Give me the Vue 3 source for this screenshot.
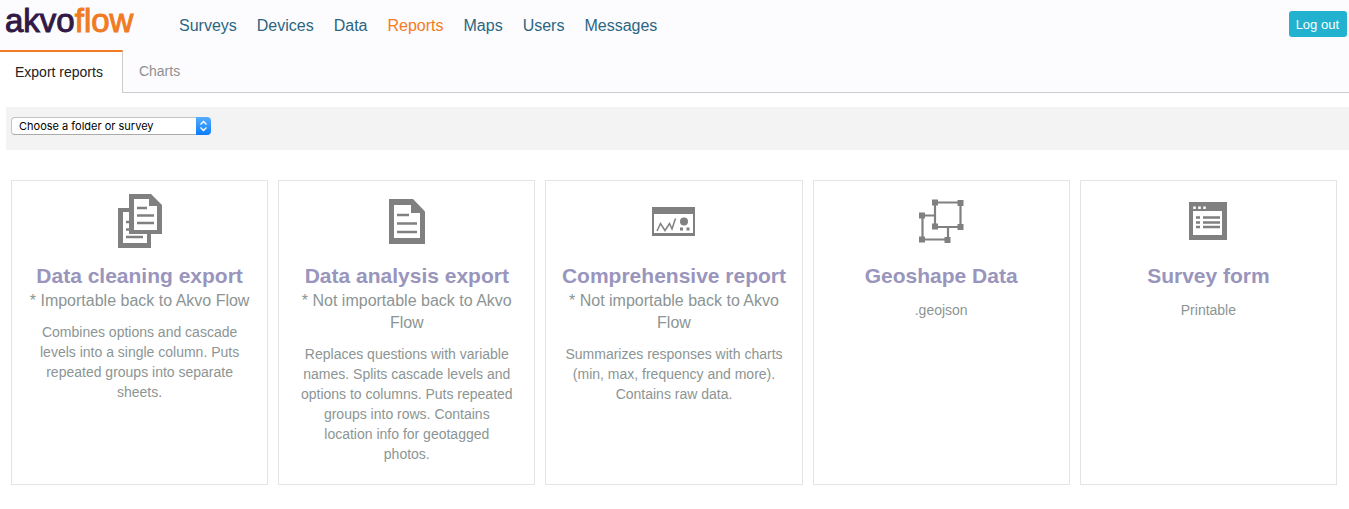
<script setup>
import { ref } from 'vue'

const nav = ['Surveys', 'Devices', 'Data', 'Reports', 'Maps', 'Users', 'Messages']
const activeNav = 'Reports'
const selected = ref('')

const cards = [
  {
    icon: 'copies',
    title: 'Data cleaning export',
    note: '* Importable back to Akvo Flow',
    text: 'Combines options and cascade levels into a single column. Puts repeated groups into separate sheets.'
  },
  {
    icon: 'document',
    title: 'Data analysis export',
    note: '* Not importable back to Akvo Flow',
    text: 'Replaces questions with variable names. Splits cascade levels and options to columns. Puts repeated groups into rows. Contains\nlocation info for geotagged\nphotos.'
  },
  {
    icon: 'dashboard',
    title: 'Comprehensive report',
    note: '* Not importable back to Akvo Flow',
    text: 'Summarizes responses with charts (min, max, frequency and more). Contains raw data.'
  },
  { icon: 'shapes', title: 'Geoshape Data', text: '.geojson' },
  { icon: 'form', title: 'Survey form', text: 'Printable' }
]
</script>

<template>
  <div class="page">
    <header class="top">
      <a class="logo" href="#">akvo<span>flow</span></a>
      <nav class="menu">
        <a v-for="item in nav" :key="item" href="#" :class="{ active: item === activeNav }">{{ item }}</a>
      </nav>
      <button class="logout" type="button">Log out</button>
    </header>

    <nav class="tabs">
      <a class="tab current" href="#">Export reports</a>
      <a class="tab" href="#">Charts</a>
      <span class="rest"></span>
    </nav>

    <main>
      <div class="filter">
        <label class="picker">
          <select v-model="selected" aria-label="Choose a folder or survey">
            <option value="">Choose a folder or survey</option>
          </select>
          <svg class="stepper" viewBox="0 0 15 18" width="15" height="18" aria-hidden="true">
            <path d="M4.5 7.5 7.5 4.5l3 3M4.5 10.5l3 3 3-3" fill="none" stroke="#fff" stroke-width="1.4" />
          </svg>
        </label>
      </div>

      <div class="cards">
        <a v-for="card in cards" :key="card.title" class="card" href="#">
          <span class="icon">
            <svg v-if="card.icon === 'copies'" width="44" height="54" viewBox="0 0 44 54" aria-hidden="true">
              <path d="M0 14h33v40H0z" fill="#808080" />
              <path d="M5 18h24v31H5z" fill="#fff" />
              <path d="M8 28h6M8 35.500h6M8 43h17" stroke="#808080" stroke-width="2.500" />
              <path d="M11 0h22l11 11v29H11z" fill="#808080" />
              <path d="M16 5h15v7h8v24H16z" fill="#fff" />
              <path d="M19 14h10M19 21.500h17M19 29h17" stroke="#808080" stroke-width="2.500" />
            </svg>
            <svg v-else-if="card.icon === 'document'" width="36" height="45" viewBox="0 0 36 45" aria-hidden="true">
              <path d="M0 0h24l12 12.500V45H0z" fill="#808080" />
              <path d="M5 6h17v8h9v25H5z" fill="#fff" />
              <path d="M8 16h12M8 24.500h20M8 33h20" stroke="#808080" stroke-width="2.700" />
            </svg>
            <svg v-else-if="card.icon === 'dashboard'" width="43" height="29" viewBox="0 0 43 29" aria-hidden="true">
              <path d="M0 0h43v29H0z" fill="#808080" />
              <path d="M2 7h39v19H2z" fill="#fff" />
              <path d="m5 24 3.500-7.500 4.500 7 4.500-7 2.500 5.500 3.500-10.500" fill="none" stroke="#808080" stroke-width="1.500" />
              <circle cx="32" cy="14.500" r="4" fill="#808080" />
              <path d="M28 20.500h3v3h-3zM34.500 20.500h3v3h-3z" fill="#808080" />
            </svg>
            <svg v-else-if="card.icon === 'shapes'" width="45" height="45" viewBox="0 0 45 45" aria-hidden="true">
              <path d="M16 3.500h25.500V28H16zM16 16.500H3.500v24H29V28" fill="none" stroke="#808080" stroke-width="2.200" />
              <path d="M13 .5h6v6h-6zM38.500 1h6v6h-6zM13 24.500h6v6h-6zM38.500 25h6v6h-6zM0 13.500h6v6H0zM0 37.500h6v6H0zM25.500 38h6v6h-6z" fill="#808080" />
            </svg>
            <svg v-else width="38" height="38" viewBox="0 0 38 38" aria-hidden="true">
              <path d="M0 0h38v38H0z" fill="#808080" />
              <path d="M4 9h29v24H4z" fill="#fff" />
              <path d="M4.200 4.500h2.600v2.600H4.200zM9.200 4.500h2.600v2.600H9.200zM14.200 4.500h2.600v2.600h-2.600z" fill="#fff" />
              <path d="M7 15.500h4M7 20.500h4M7 25h4M14 15.500h17M14 20.500h17M14 25h17" stroke="#808080" stroke-width="2.500" />
            </svg>
          </span>
          <h2>{{ card.title }}</h2>
          <span v-if="card.note" class="note">{{ card.note }}</span>
          <p>{{ card.text }}</p>
        </a>
      </div>
    </main>
  </div>
</template>

<style>
body {
  margin: 0;
  background: #fff;
}
</style>

<style scoped>
.page {
  font-family: "Liberation Sans", Arial, sans-serif;
}
a {
  color: inherit;
  text-decoration: none;
}
.top {
  display: flex;
  align-items: flex-start;
  height: 50px;
  padding: 0 2px 0 5px;
  background: #fcfcff;
}
.logo {
  width: 174px;
  font-size: 33px;
  line-height: 42px;
  color: #321945;
  -webkit-text-stroke: 1px currentColor;
}
.logo span {
  color: #f07b22;
}
.menu {
  display: flex;
  gap: 20px;
  flex: 1;
  font-size: 16px;
  line-height: 20px;
  padding-top: 16px;
  color: #2b6580;
}
.menu .active {
  color: #f47b20;
}
.logout {
  height: 26px;
  margin-top: 11px;
  padding: 0 8px 0 7px;
  border: 0;
  border-radius: 3px;
  background: #22b2d0;
  color: #fff;
  font-family: inherit;
  font-size: 13px;
}
.tabs {
  display: flex;
  background: #fcfcff;
  font-size: 14px;
}
.tab {
  box-sizing: border-box;
  height: 43px;
  padding: 0 16px;
  line-height: 42px;
  color: #8f8f8f;
  border-bottom: 1px solid #ccc;
}
.tab.current {
  padding: 0 19px 0 15px;
  line-height: 41px;
  background: #fff;
  color: #222;
  border-top: 2px solid #f07b22;
  border-right: 1px solid #ccc;
  border-bottom: 0;
}
.rest {
  flex: 1;
  border-bottom: 1px solid #ccc;
}
.filter {
  box-sizing: border-box;
  height: 43px;
  margin: 14px 0 30px 6px;
  padding: 10px 5px;
  background: #f3f3f3;
}
.picker {
  display: flex;
  width: 200px;
  height: 18px;
}
select {
  appearance: none;
  box-sizing: border-box;
  flex: 1;
  height: 18px;
  padding: 0 7px;
  border: 1px solid #c4c4c4;
  border-bottom-color: #aaa;
  border-right: 0;
  border-radius: 4px 0 0 4px;
  background: #fff;
  color: #000;
  font-family: Inter, Roboto, sans-serif;
  font-size: 11px;
}
.stepper {
  border-radius: 0 4px 4px 0;
  background: linear-gradient(#56aefa, #0a7cfd);
}
.cards {
  display: grid;
  grid-template-columns: repeat(5, 1fr);
  gap: 10px;
  padding: 0 12px 0 11px;
}
.card {
  padding: 0 14px 20px;
  border: 1px solid #e4e4e4;
  text-align: center;
  color: #8c9594;
}
.icon {
  display: flex;
  align-items: center;
  justify-content: center;
  height: 80px;
}
h2 {
  margin: 0;
  font-size: 21px;
  line-height: 29px;
  color: #9995bc;
}
.note {
  display: block;
  font-size: 16px;
  line-height: 22px;
}
p {
  margin: 10px 0 0;
  font-size: 14px;
  line-height: 20px;
  white-space: pre-line;
}
</style>
